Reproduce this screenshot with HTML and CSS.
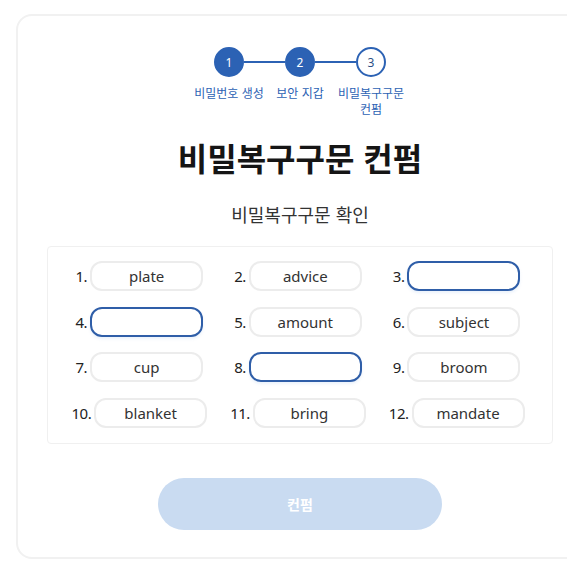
FILE: index.html
```html
<!DOCTYPE html>
<html lang="ko">
<head>
  <meta charset="UTF-8">
  <meta name="viewport" content="width=device-width, initial-scale=1.0">
  <title>비밀복구구문 컨펌</title>
  <link rel="stylesheet" href="styles.css">
</head>
<body>
  <div class="card">
    <!-- Step indicator -->
    <div class="stepper">
      <div class="step-row">
        <span class="circle done">1</span>
        <span class="line"></span>
        <span class="circle done">2</span>
        <span class="line"></span>
        <span class="circle">3</span>
      </div>
      <div class="step-labels">
        <span>비밀번호 생성</span>
        <span>보안 지갑</span>
        <span>비밀복구구문 컨펌</span>
      </div>
    </div>

    <h1>비밀복구구문 컨펌</h1>
    <p class="subtitle">비밀복구구문 확인</p>

    <!-- Phrase grid -->
    <div class="phrase-box" id="phraseGrid"></div>

    <button class="confirm" disabled>컨펌</button>
  </div>

  <script>
    const words = ['plate', 'advice', '', '', 'amount', 'subject', 'cup', '', 'broom', 'blanket', 'bring', 'mandate'];
    const grid = document.getElementById('phraseGrid');

    words.forEach((word, i) => {
      const cell = document.createElement('div');
      cell.className = 'cell';
      const label = document.createElement('span');
      label.className = 'num';
      label.textContent = (i + 1) + '.';
      const input = document.createElement('input');
      input.type = 'text';
      input.value = word;
      if (word) {
        input.readOnly = true;
      } else {
        input.className = 'empty';
      }
      cell.appendChild(label);
      cell.appendChild(input);
      grid.appendChild(cell);
    });
  </script>
</body>
</html>
```

FILE: styles.css
```css
body {
  margin: 0;
  font-family: "Noto Sans", "Noto Sans CJK KR", sans-serif;
  background: #fff;
  overflow: hidden;
}
.card {
  width: 568px;
  box-sizing: border-box;
  margin: 14px 0 0 16px;
  padding: 31px 0 27px;
  border: 2px solid #f1f1f1;
  border-radius: 16px;
}
.stepper {
  display: flex;
  flex-direction: column;
  align-items: center;
}
.step-row {
  display: flex;
  align-items: center;
}
.circle {
  width: 30px;
  height: 30px;
  box-sizing: border-box;
  border-radius: 50%;
  border: 2px solid #2c62b4;
  color: #2c4f86;
  background: #fff;
  font-size: 12px;
  display: flex;
  align-items: center;
  justify-content: center;
}
.circle.done {
  background: #2c62b4;
  color: #fff;
}
.line {
  width: 41px;
  height: 2px;
  background: #2c62b4;
}
.step-labels {
  display: grid;
  grid-template-columns: repeat(3, 71px);
  margin-top: 8px;
  font-family: "Noto Sans CJK KR", sans-serif;
  font-size: 12px;
  line-height: 16px;
  color: #2c62b4;
  text-align: center;
}
h1 {
  margin: 22px 0 0;
  font-family: "Noto Sans CJK KR", sans-serif;
  font-size: 32px;
  line-height: 36px;
  font-weight: 700;
  color: #151515;
  text-align: center;
}
.subtitle {
  margin: 27px 0 0;
  font-family: "Noto Sans CJK KR", sans-serif;
  font-size: 18px;
  line-height: 24px;
  color: #333;
  text-align: center;
}
.phrase-box {
  width: 506px;
  box-sizing: border-box;
  margin: 20px auto 0;
  padding: 14px 16px 15px 12px;
  border: 1px solid #f0f0f0;
  border-radius: 4px;
  display: grid;
  grid-template-columns: repeat(3, 1fr);
  row-gap: 15.5px;
}
.cell {
  display: flex;
  align-items: center;
  justify-content: center;
}
.num {
  font-size: 15px;
  color: #222;
  margin-right: 3px;
  letter-spacing: -0.5px;
}
.cell input {
  width: 113px;
  height: 30px;
  box-sizing: border-box;
  border: 2px solid #ececec;
  border-radius: 12px;
  font-family: inherit;
  font-size: 15px;
  color: #333;
  text-align: center;
  outline: none;
  padding: 0;
  background: #fff;
}
.cell input.empty {
  border-color: #2f5ea8;
  box-shadow: 0 2px 3px rgba(120, 170, 230, 0.15);
}
.confirm {
  display: block;
  width: 284px;
  height: 52px;
  margin: 34px auto 0;
  border: none;
  border-radius: 26px;
  background: #c9dbf1;
  color: #fff;
  font-family: "Noto Sans CJK KR", sans-serif;
  font-size: 14px;
  font-weight: 700;
}
```
